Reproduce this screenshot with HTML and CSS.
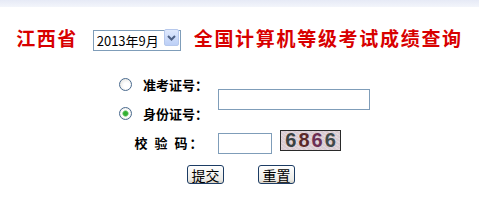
FILE: index.html
```html
<!DOCTYPE html>
<html lang="zh-CN">
<head>
    <meta charset="UTF-8">
    <title>全国计算机等级考试成绩查询</title>
    <link rel="stylesheet" href="styles.css">
</head>
<body>
    <div class="topbar"></div>
    <div class="title-row">
        <span class="province">江西省</span>
        <span class="select-wrap">
            <select class="exam-select">
                <option>2013年9月</option>
                <option>2013年3月</option>
            </select>
            <span class="select-arrow">
                <svg width="9" height="6" viewBox="0 0 9 6"><path d="M1 1 L4.5 4.5 L8 1" fill="none" stroke="#4d6185" stroke-width="2"/></svg>
            </span>
        </span>
        <span class="title">全国计算机等级考试成绩查询</span>
    </div>

    <form class="query">
        <input class="radio r1" type="radio" name="idtype" id="zkz">
        <label class="label r1" for="zkz">准考证号：</label>
        <input class="radio r2" type="radio" name="idtype" id="sfz" checked>
        <label class="label r2" for="sfz">身份证号：</label>
        <input class="text-input id-input" type="text">

        <span class="label check-label">校 验 码：</span>
        <div class="check-cell">
            <input class="text-input code-input" type="text">
            <span class="captcha"><span class="d1">6</span><span class="d2">8</span><span class="d3">6</span><span class="d4">6</span></span>
        </div>
    </form>

    <div class="buttons">
        <button class="btn" type="button">提交</button>
        <button class="btn" type="button">重置</button>
    </div>
</body>
</html>
```

FILE: styles.css
```css
body {
    margin: 0;
    width: 479px;
    background: #fff;
    font-family: "Noto Sans CJK SC", "DejaVu Sans", sans-serif;
}

.topbar {
    height: 7px;
    background: linear-gradient(to bottom, #e6eaf6, #f3f5fb);
}

.title-row {
    display: flex;
    align-items: center;
    justify-content: center;
    margin-top: 20px;
    height: 21px;
}

.province,
.title {
    color: #d80000;
    font-size: 19px;
    font-weight: bold;
    letter-spacing: 1.5px;
    line-height: 21px;
}

.province {
    margin-right: 15px;
}

.title {
    margin-left: 13px;
    letter-spacing: 1.7px;
}

.select-wrap {
    position: relative;
    display: inline-block;
    width: 88px;
    height: 21px;
}

.exam-select {
    appearance: none;
    -webkit-appearance: none;
    box-sizing: border-box;
    width: 88px;
    height: 21px;
    margin: 0;
    padding: 0 0 0 3px;
    border: 1px solid #7f9db9;
    border-radius: 0;
    background: #fff;
    font-family: "Noto Sans CJK SC", sans-serif;
    font-size: 13px;
    color: #000;
}

.select-arrow {
    position: absolute;
    top: 2px;
    right: 2px;
    width: 15px;
    height: 17px;
    display: flex;
    align-items: center;
    justify-content: center;
    box-sizing: border-box;
    border: 1px solid #b6c8ec;
    border-radius: 2px;
    background: linear-gradient(to bottom, #dfe9fd, #bccff6);
    pointer-events: none;
}

.query {
    display: grid;
    grid-template-columns: 24px 75px auto;
    grid-template-rows: 29px 29px 30px;
    margin: 0 0 0 119px;
    margin-top: 22px;
    align-items: center;
}

.radio {
    appearance: none;
    -webkit-appearance: none;
    width: 13px;
    height: 13px;
    margin: 0;
    border: 1px solid #4a6a8e;
    border-radius: 50%;
    background: radial-gradient(circle at 60% 60%, #fff 30%, #dcdcd6 100%);
    box-sizing: border-box;
}

.radio:checked {
    background: radial-gradient(circle, #2fae2f 0, #36b236 2px, #a9dca9 3px, #fff 3.6px, #dcdcd6 100%);
}

.r1 { grid-row: 1; }
.r2 { grid-row: 2; }

.label {
    font-size: 13px;
    font-weight: bold;
    color: #000;
    line-height: 16px;
}

.id-input {
    grid-column: 3;
    grid-row: 1 / 3;
    width: 152px;
    margin-top: -2px;
}

.text-input {
    box-sizing: border-box;
    height: 21px;
    margin: 0;
    border: 1px solid #7f9db9;
    background: #fff;
    outline: none;
}

.check-label {
    grid-column: 1 / 3;
    grid-row: 3;
    text-align: center;
    letter-spacing: 2px;
    padding-left: 2px;
}

.check-cell {
    grid-column: 3;
    grid-row: 3;
    display: flex;
    align-items: center;
    gap: 8px;
}

.code-input {
    width: 54px;
    margin-top: 1px;
}

.captcha {
    box-sizing: border-box;
    width: 61px;
    height: 21px;
    margin-top: -5px;
    border: 1px solid #2a2a2a;
    background:
        repeating-linear-gradient(35deg, rgba(255,255,255,0.25) 0 1px, transparent 1px 3px),
        #d9cbd2;
    font-family: "Liberation Sans", Arial, sans-serif;
    font-weight: bold;
    font-size: 20px;
    line-height: 19px;
    letter-spacing: 2px;
    text-align: center;
    padding-left: 2px;
}

.d1 { color: #394242; }
.d2 { color: #5b2828; }
.d3 { color: #6c2f54; }
.d4 { color: #414a4a; }

.buttons {
    display: flex;
    justify-content: center;
    gap: 34px;
    margin-top: 7px;
    padding-left: 3px;
}

.btn {
    box-sizing: border-box;
    width: 37px;
    height: 19px;
    padding: 0;
    border: 1px solid #1c3c64;
    border-radius: 3px;
    background: linear-gradient(to bottom, #ffffff, #ecebe6 80%, #d6d0c5);
    font-family: "Noto Sans CJK SC", sans-serif;
    font-size: 14px;
    line-height: 16px;
    color: #000;
}
```
